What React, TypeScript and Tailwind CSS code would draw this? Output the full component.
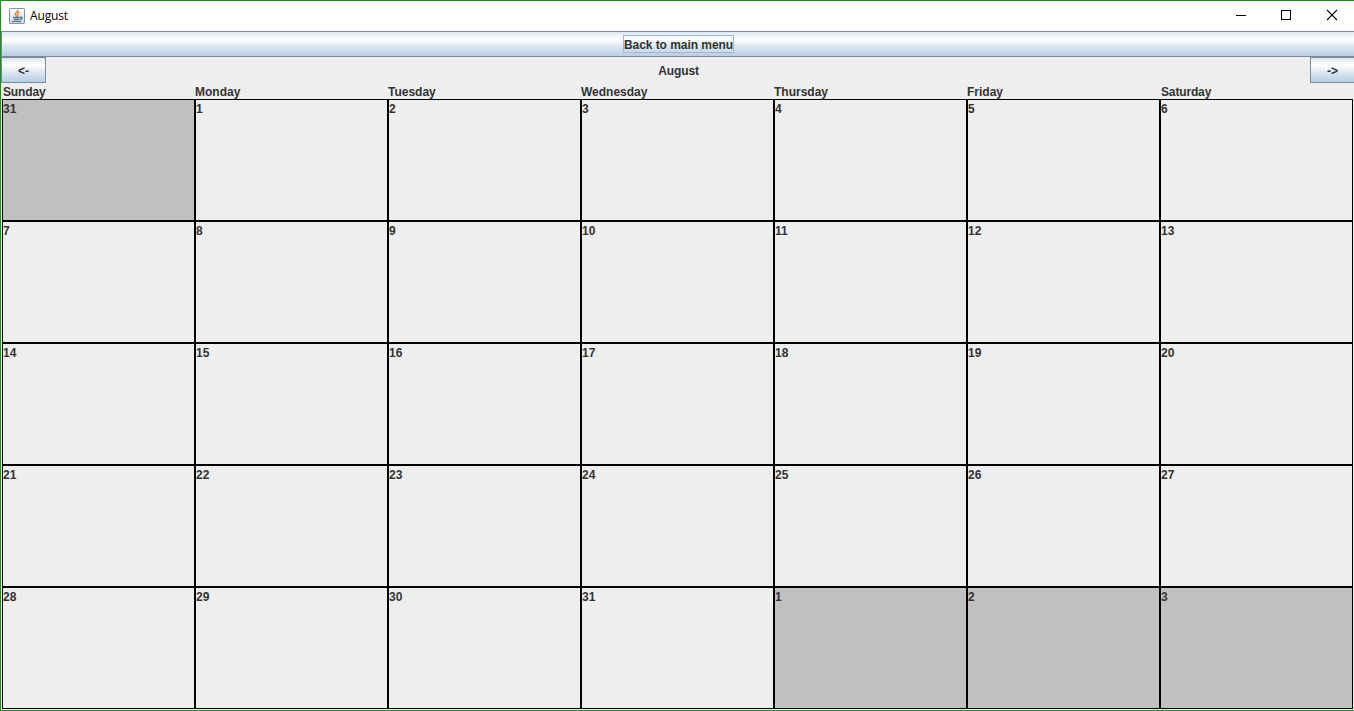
const days = ["Sunday", "Monday", "Tuesday", "Wednesday", "Thursday", "Friday", "Saturday"];

const cells = Array.from({ length: 35 }, (_, i) => {
  if (i === 0) return { label: 31, outside: true };
  if (i > 31) return { label: i - 31, outside: true };
  return { label: i, outside: false };
});

const metal = "bg-[linear-gradient(to_bottom,#dde8f3_0%,#ffffff_30%,#dbe7f2_60%,#b8cfe5_100%)]";

function JavaIcon() {
  return (
    <svg width="16" height="16" viewBox="0 0 16 16" className="shrink-0">
      <defs>
        <linearGradient id="tile" x1="0" y1="0" x2="0" y2="1">
          <stop offset="0" stopColor="#ffffff" />
          <stop offset="1" stopColor="#cbd6e0" />
        </linearGradient>
      </defs>
      <rect x="0.5" y="0.5" width="15" height="15" rx="0.7" fill="url(#tile)" stroke="#7d95ab" />
      <path d="M8.8 1.8C9.3 4 6 4.5 6.3 6.3C6.4 7.2 7.4 7.6 7.6 8.6M10.6 4.2C8.6 5 8 5.8 8.8 6.8C9.2 7.5 8.8 8 8.3 8.6" fill="none" stroke="#e8832e" strokeWidth="1.4" />
      <path d="M4 9.5H10.8M5 11.4H10.2M3 13.4H12M11 9.2C13.8 8.4 13.6 11 11 11.4" fill="none" stroke="#4e7896" strokeWidth="1.3" />
    </svg>
  );
}

export default function App() {
  return (
    <div className="flex h-[711px] w-[1354px] flex-col overflow-hidden border-t border-b border-l border-[#218a21] bg-[#eeeeee] font-['Liberation_Sans',Arial,sans-serif] text-[12px] leading-[16px] font-bold text-[#333333]">
      <header className="flex h-[30px] shrink-0 items-center justify-between bg-white pl-2 text-black">
        <div className="flex items-center gap-[5px]">
          <JavaIcon />
          <span className="font-['Open_Sans',sans-serif] text-[12px] font-normal tracking-[-0.15px]">August</span>
        </div>
        <svg width="137" height="30" viewBox="0 0 137 30" fill="none" stroke="#000000" shapeRendering="crispEdges">
          <path d="M19 14.5H29" />
          <rect x="64.5" y="9.5" width="9" height="9" />
          <path d="M110 9L120 19M120 9L110 19" shapeRendering="auto" strokeWidth="1.1" />
        </svg>
      </header>

      <button className={`flex h-[26px] shrink-0 items-center justify-center border-y border-l border-[#7a8a99] ${metal}`}>
        <span className="flex h-[18px] w-[111px] items-center justify-center border border-[#a3b8cc] pt-[2px] pl-px tracking-[-0.05px] whitespace-nowrap">Back to main menu</span>
      </button>

      <div className="flex h-[26px] shrink-0 items-center justify-between">
        <button className={`flex h-[26px] w-[45px] items-center justify-center border border-[#7a8a99] pt-[2px] ${metal}`}>&lt;-</button>
        <span className="pt-px pl-px tracking-[-0.1px]">August</span>
        <button className={`flex h-[26px] w-[44px] items-center justify-center border border-r-0 border-[#7a8a99] pt-[2px] ${metal}`}>-&gt;</button>
      </div>

      <div className="ml-px grid h-[16px] shrink-0 grid-cols-[repeat(7,193px)]">
        {days.map((day) => (
          <span key={day} className={`pt-px leading-[17px] ${day === "Sunday" || day === "Saturday" ? "pl-px tracking-[-0.15px]" : ""}`}>{day}</span>
        ))}
      </div>

      <main className="ml-px grid h-[610px] shrink-0 grid-cols-[repeat(7,193px)] grid-rows-[repeat(5,122px)]">
        {cells.map((cell, i) => (
          <div key={i} className={`border border-black leading-[19px] ${cell.outside ? "bg-[#c0c0c0]" : ""}`}>
            {cell.label}
          </div>
        ))}
      </main>
    </div>
  );
}
